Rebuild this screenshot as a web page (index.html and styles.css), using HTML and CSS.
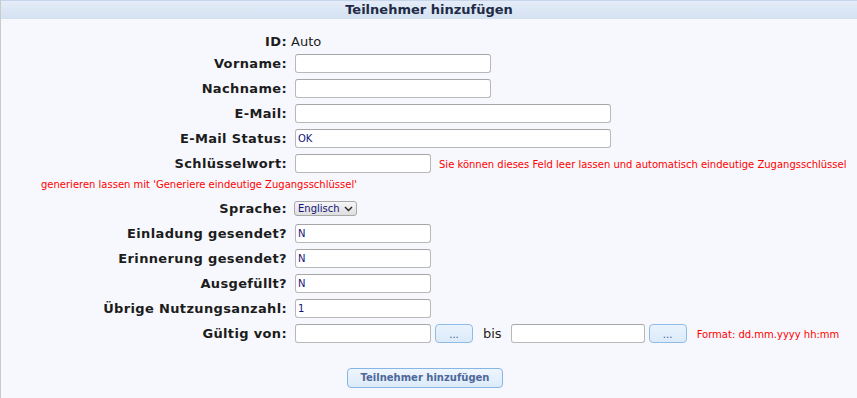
FILE: index.html
```html
<!DOCTYPE html>
<html lang="de">
<head>
    <meta charset="UTF-8">
    <meta name="viewport" content="width=device-width, initial-scale=1.0">
    <title>Teilnehmer hinzufügen</title>
    <link rel="stylesheet" href="styles.css">
</head>
<body>
    <div class="panel">
        <div class="panel-head">Teilnehmer hinzufügen</div>

        <form class="participant-form" onsubmit="return false">
            <div class="row row-id"><label class="lbl">ID:</label><span class="value">Auto</span></div>
            <div class="row"><label class="lbl" for="firstname">Vorname:</label><input class="field field-md" id="firstname" type="text"></div>
            <div class="row"><label class="lbl" for="lastname">Nachname:</label><input class="field field-md" id="lastname" type="text"></div>
            <div class="row"><label class="lbl" for="email">E-Mail:</label><input class="field field-lg" id="email" type="text"></div>
            <div class="row"><label class="lbl" for="emailstatus">E-Mail Status:</label><input class="field field-lg" id="emailstatus" type="text" value="OK"></div>
            <div class="row"><label class="lbl" for="token">Schlüsselwort:</label><input class="field field-sm" id="token" type="text"><span class="hint">Sie können dieses Feld leer lassen und automatisch eindeutige Zugangsschlüssel generieren lassen mit 'Generiere eindeutige Zugangsschlüssel'</span></div>
            <div class="row row-lang"><label class="lbl" for="language">Sprache:</label><span class="select-wrap"><select class="select" id="language"><option>Englisch</option><option>Deutsch</option></select><svg class="chevron" width="9" height="6" viewBox="0 0 9 6"><path d="M1 1l3.5 3.5L8 1" fill="none" stroke="#222" stroke-width="1.4"/></svg></span></div>
            <div class="row"><label class="lbl" for="sent">Einladung gesendet?</label><input class="field field-sm" id="sent" type="text" value="N"></div>
            <div class="row"><label class="lbl" for="remindersent">Erinnerung gesendet?</label><input class="field field-sm" id="remindersent" type="text" value="N"></div>
            <div class="row"><label class="lbl" for="completed">Ausgefüllt?</label><input class="field field-sm" id="completed" type="text" value="N"></div>
            <div class="row"><label class="lbl" for="usesleft">Übrige Nutzungsanzahl:</label><input class="field field-sm" id="usesleft" type="text" value="1"></div>
            <div class="row"><label class="lbl" for="validfrom">Gültig von:</label><input class="field field-sm" id="validfrom" type="text"><button class="dots-btn" type="button">...</button><span class="until">bis</span><input class="field field-date" id="validuntil" type="text"><button class="dots-btn" type="button">...</button><span class="hint hint-format">Format: dd.mm.yyyy hh:mm</span></div>

            <div class="submit-row">
                <button class="submit-btn" type="submit">Teilnehmer hinzufügen</button>
            </div>
        </form>
    </div>
</body>
</html>
```

FILE: styles.css
```css
/* Allgemein */
body {
    margin: 0;
    font-family: 'DejaVu Sans', sans-serif;
    background-color: #f7f8fd;
    color: #1c1c1c;
}

.panel {
    min-height: 100vh;
    border-left: 1px solid #cacaca;
    box-sizing: border-box;
}

/* Kopfzeile */
.panel-head {
    height: 19px;
    line-height: 17px;
    border-top: 1px solid #c6d5ea;
    border-bottom: 1px solid #d3e0f0;
    background: linear-gradient(#e4ecf8, #dbe6f4 60%, #d5e2f2);
    text-align: center;
    font-weight: bold;
    font-size: 13px;
    color: #1f2b45;
    box-sizing: border-box;
}

/* Formular */
.participant-form {
    padding: 10px 8px 0 40px;
}

.row {
    padding: 3px 0;
    line-height: 19px;
    font-size: 13px;
}

.row-id {
    padding-bottom: 0;
}

.row-lang {
    padding-top: 2px;
}

.lbl {
    display: inline-block;
    width: 246px;
    margin-right: 4px;
    text-align: right;
    font-weight: bold;
    letter-spacing: 0.35px;
    color: #1c1c1c;
}

.value {
    color: #1c1c1c;
}

.field {
    height: 19px;
    margin: 0 0 0 4px;
    padding: 0 2px;
    border: 1px solid #b9b9b9;
    border-top-color: #a6a6a6;
    border-radius: 3px;
    background: white;
    box-sizing: border-box;
    vertical-align: top;
    font-family: 'DejaVu Sans', sans-serif;
    font-size: 10px;
    color: #15157a;
}

.field-md { width: 196px; }
.field-lg { width: 316px; }
.field-sm { width: 136px; }
.field-date { width: 134px; margin-left: 0; }

.hint {
    margin-left: 8px;
    font-size: 10px;
    color: #f00;
}

.hint-format {
    margin-left: 10px;
}

.until {
    margin: 0 9px 0 10px;
}

/* Auswahlfeld */
.select-wrap {
    position: relative;
    display: inline-block;
    margin: 2px 0 0 3px;
    vertical-align: top;
    line-height: 0;
}

.select {
    appearance: none;
    -webkit-appearance: none;
    width: 63px;
    height: 15px;
    margin: 0;
    padding: 0 0 0 3px;
    border: 1px solid #a9a9a9;
    border-radius: 3px;
    background: linear-gradient(#f6f6f6, #dedede);
    font-family: 'DejaVu Sans', sans-serif;
    font-size: 10px;
    line-height: 13px;
    color: #15157a;
}

.chevron {
    position: absolute;
    right: 4px;
    top: 5px;
    pointer-events: none;
}

/* Schaltflächen */
.dots-btn {
    width: 38px;
    height: 19px;
    margin-left: 4px;
    padding: 2px 0 0;
    border: 1px solid #8fbbe7;
    border-radius: 4px;
    background: linear-gradient(#eaf3fd, #dbeaf9);
    vertical-align: top;
    font-family: 'DejaVu Sans', sans-serif;
    font-size: 10px;
    line-height: 15px;
    color: #3f5f91;
    cursor: pointer;
}

.submit-row {
    margin-top: 19px;
    margin-left: -40px;
    text-align: center;
}

.submit-btn {
    width: 156px;
    height: 20px;
    padding: 0;
    border: 1px solid #86b6e6;
    border-radius: 4px;
    background: linear-gradient(#eef5fd, #dcebfa);
    font-family: 'DejaVu Sans', sans-serif;
    font-size: 10px;
    font-weight: bold;
    color: #4d6799;
    cursor: pointer;
}
```
